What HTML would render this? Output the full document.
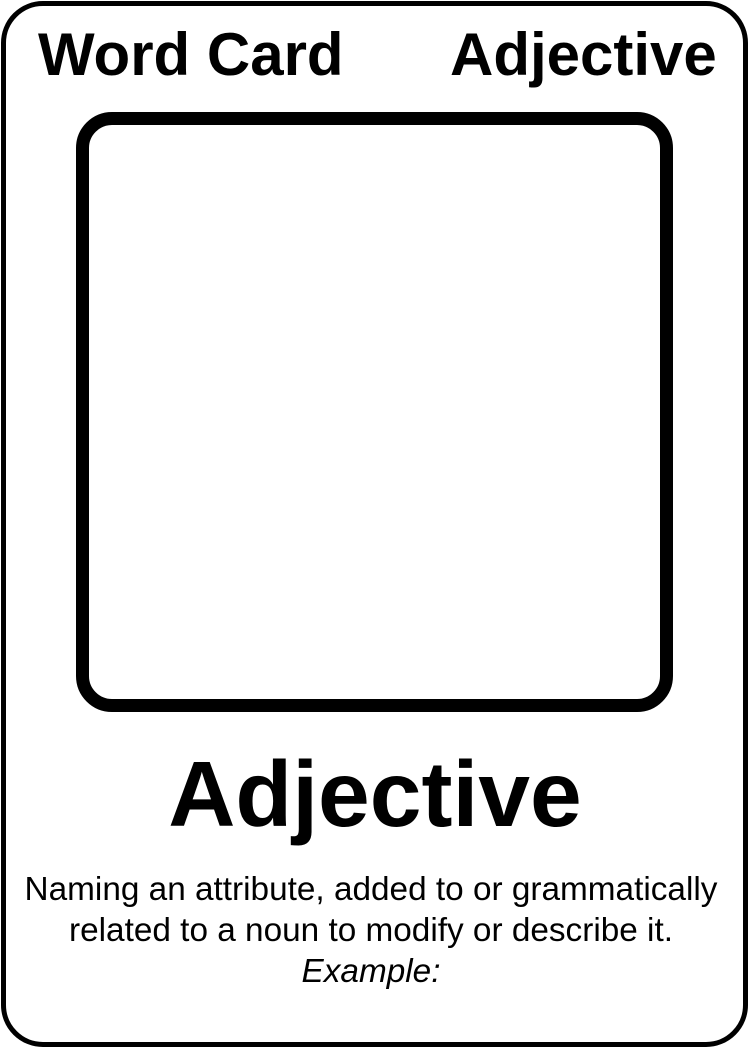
<!DOCTYPE html>
<html><head><style>
body{margin:0;width:750px;height:1050px;background:#fff;position:relative;font-family:"Liberation Sans",Arial,sans-serif;overflow:hidden}
.outer{position:absolute;left:1px;top:1px;width:737px;height:1036px;border:5px solid #000;border-radius:42px}
.inner{position:absolute;left:76px;top:112px;width:571px;height:574px;border:13px solid #000;border-radius:36px}
.t{position:absolute;font-weight:bold;font-size:60px;line-height:1;white-space:nowrap}
.big{position:absolute;left:0;width:750px;text-align:center;top:748px;font-weight:bold;font-size:93px;line-height:1}
.desc{position:absolute;left:-4px;width:750px;text-align:center;top:868px;font-size:33px;line-height:41px;transform:scaleX(1.01);transform-origin:375px 0}
</style></head><body>
<div class="outer"></div>
<div class="t" style="left:38px;top:25px">Word Card</div>
<div class="t" style="left:450px;top:25px">Adjective</div>
<div class="inner"></div>
<div class="big">Adjective</div>
<div class="desc">Naming an attribute, added to or grammatically<br>related to a noun to modify or describe it.<br><i>Example:</i></div>
</body></html>
